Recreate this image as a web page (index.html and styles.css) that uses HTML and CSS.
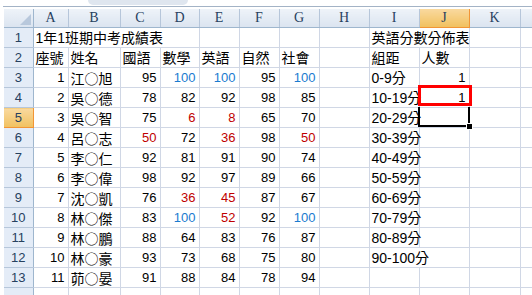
FILE: index.html
```html
<!DOCTYPE html>
<html lang="zh-Hant">
<head>
  <meta charset="UTF-8">
  <meta name="viewport" content="width=device-width, initial-scale=1.0">
  <link rel="stylesheet" href="styles.css">
  <title>1年1班期中考成績表</title>
</head>
<body>

  <div class="topbar">
    <div class="splitter"></div>
  </div>

  <div class="sheet">
    <table class="grid">
      <colgroup>
        <col style="width:29px">
        <col style="width:35px">
        <col style="width:52px">
        <col style="width:40px">
        <col style="width:39px">
        <col style="width:40px">
        <col style="width:40px">
        <col style="width:40px">
        <col style="width:50px">
        <col style="width:50px">
        <col style="width:50px">
        <col style="width:51px">
        <col style="width:12px">
      </colgroup>
      <tr class="colhead">
        <th class="corner"></th>
        <th>A</th><th>B</th><th>C</th><th>D</th><th>E</th><th>F</th><th>G</th>
        <th>H</th><th>I</th><th class="sel">J</th><th>K</th><th></th>
      </tr>
      <tr>
        <th class="rowhead">1</th>
        <td colspan="4" class="txt">1年1班期中考成績表</td>
        <td></td><td></td><td></td><td></td>
        <td colspan="2" class="txt">英語分數分佈表</td>
        <td></td><td></td>
      </tr>
      <tr>
        <th class="rowhead">2</th>
        <td class="txt">座號</td><td class="txt">姓名</td><td class="txt">國語</td><td class="txt">數學</td>
        <td class="txt">英語</td><td class="txt">自然</td><td class="txt">社會</td><td></td>
        <td class="txt">組距</td><td class="txt">人數</td><td></td><td></td>
      </tr>
      <tr>
        <th class="rowhead">3</th>
        <td class="num">1</td><td class="txt name">江○旭</td><td class="num">95</td><td class="num top">100</td>
        <td class="num top">100</td><td class="num">95</td><td class="num top">100</td><td></td>
        <td class="txt">0-9分</td><td class="num">1</td><td></td><td></td>
      </tr>
      <tr>
        <th class="rowhead">4</th>
        <td class="num">2</td><td class="txt name">吳○德</td><td class="num">78</td><td class="num">82</td>
        <td class="num">92</td><td class="num">98</td><td class="num">85</td><td></td>
        <td class="txt">10-19分</td><td class="num">1</td><td></td><td></td>
      </tr>
      <tr>
        <th class="rowhead sel">5</th>
        <td class="num">3</td><td class="txt name">吳○智</td><td class="num">75</td><td class="num low">6</td>
        <td class="num low">8</td><td class="num">65</td><td class="num">70</td><td></td>
        <td class="txt">20-29分</td><td></td><td></td><td></td>
      </tr>
      <tr>
        <th class="rowhead">6</th>
        <td class="num">4</td><td class="txt name">呂○志</td><td class="num low">50</td><td class="num">72</td>
        <td class="num low">36</td><td class="num">98</td><td class="num low">50</td><td></td>
        <td class="txt">30-39分</td><td></td><td></td><td></td>
      </tr>
      <tr>
        <th class="rowhead">7</th>
        <td class="num">5</td><td class="txt name">李○仁</td><td class="num">92</td><td class="num">81</td>
        <td class="num">91</td><td class="num">90</td><td class="num">74</td><td></td>
        <td class="txt">40-49分</td><td></td><td></td><td></td>
      </tr>
      <tr>
        <th class="rowhead">8</th>
        <td class="num">6</td><td class="txt name">李○偉</td><td class="num">98</td><td class="num">92</td>
        <td class="num">97</td><td class="num">89</td><td class="num">66</td><td></td>
        <td class="txt">50-59分</td><td></td><td></td><td></td>
      </tr>
      <tr>
        <th class="rowhead">9</th>
        <td class="num">7</td><td class="txt name">沈○凱</td><td class="num">76</td><td class="num low">36</td>
        <td class="num low">45</td><td class="num">87</td><td class="num">67</td><td></td>
        <td class="txt">60-69分</td><td></td><td></td><td></td>
      </tr>
      <tr>
        <th class="rowhead">10</th>
        <td class="num">8</td><td class="txt name">林○傑</td><td class="num">83</td><td class="num top">100</td>
        <td class="num low">52</td><td class="num">92</td><td class="num top">100</td><td></td>
        <td class="txt">70-79分</td><td></td><td></td><td></td>
      </tr>
      <tr>
        <th class="rowhead">11</th>
        <td class="num">9</td><td class="txt name">林○鵬</td><td class="num">88</td><td class="num">64</td>
        <td class="num">83</td><td class="num">76</td><td class="num">87</td><td></td>
        <td class="txt">80-89分</td><td></td><td></td><td></td>
      </tr>
      <tr>
        <th class="rowhead">12</th>
        <td class="num">10</td><td class="txt name">林○豪</td><td class="num">93</td><td class="num">73</td>
        <td class="num">68</td><td class="num">75</td><td class="num">80</td><td></td>
        <td colspan="2" class="txt">90-100分</td><td></td><td></td>
      </tr>
      <tr>
        <th class="rowhead">13</th>
        <td class="num">11</td><td class="txt name">茆○晏</td><td class="num">91</td><td class="num">88</td>
        <td class="num">84</td><td class="num">78</td><td class="num">94</td><td></td>
        <td></td><td></td><td></td><td></td>
      </tr>
      <tr>
        <th class="rowhead"></th>
        <td></td><td></td><td></td><td></td><td></td><td></td><td></td>
        <td></td><td></td><td></td><td></td><td></td>
      </tr>
    </table>

    <!-- drawn rectangle over J4 and the active cell J5 -->
    <div class="redbox"></div>
    <div class="active"><span class="handle"></span></div>
  </div>

</body>
</html>
```

FILE: styles.css
```css
html, body {
  margin: 0;
  height: 295px;
  overflow: hidden;
  background: #fff;
}

body {
  font-family: 'Liberation Sans', 'Noto Sans CJK TC', sans-serif;
  font-size: 13px;
  color: #000;
}

.topbar {
  height: 6px;
  margin-left: 3px;
  border-bottom: 1px solid #a3b3c6;
  margin-bottom: 2px;
  display: flex;
}

.splitter {
  width: 100px;
  margin-left: 85px;
  height: 5px;
  background: #dfe6ef;
  border-bottom-left-radius: 6px;
  border-bottom-right-radius: 6px;
}

.sheet {
  position: relative;
  padding-left: 4px;
}

.grid {
  border-collapse: collapse;
  table-layout: fixed;
  width: 528px;
}

.grid td {
  height: 19px;
  padding: 0 3px 0 3px;
  border-right: 1px solid #d0d7e5;
  border-bottom: 1px solid #d0d7e5;
  line-height: 18px;
  vertical-align: bottom;
  white-space: nowrap;
  overflow: visible;
}

.grid .txt {
  font-size: 14px;
  text-align: left;
  padding-left: 2px;
}

.grid .name {
  font-family: 'Noto Sans CJK TC', sans-serif;
}

.grid .num {
  text-align: right;
}

.grid .top {
  color: #1a7bd0;
}

.grid .low {
  color: #c00000;
}

.colhead th {
  height: 18px;
  padding: 0;
  font-family: 'Liberation Serif', serif;
  font-weight: normal;
  font-size: 14px;
  color: #27415f;
  background: linear-gradient(#eef3f9, #dbe4f0);
  border-right: 1px solid #b6c6da;
  border-bottom: 1px solid #9eb6ce;
  line-height: 18px;
}

.colhead .corner {
  position: relative;
  border-right: 1px solid #9eb6ce;
}

.corner::after {
  content: '';
  position: absolute;
  right: 2px;
  bottom: 2px;
  border-left: 11px solid transparent;
  border-bottom: 11px solid #b8c8dc;
}

.rowhead {
  padding: 0;
  font-weight: normal;
  font-size: 13px;
  color: #27415f;
  background: #e4ecf7;
  border-right: 1px solid #9eb6ce;
  border-bottom: 1px solid #b6c6da;
  text-align: center;
  vertical-align: middle;
}

.grid .sel {
  background: linear-gradient(#f9d99f, #f1c15f);
  border-right-color: #f29536;
  border-bottom-color: #f29536;
}

.redbox {
  position: absolute;
  left: 418px;
  top: 76px;
  width: 48px;
  height: 15px;
  border: 3px solid #ff0000;
}

.active {
  position: absolute;
  left: 418px;
  top: 98px;
  width: 48px;
  height: 18px;
  border: 2px solid #000;
  border-top: none;
}

.handle {
  position: absolute;
  right: -5px;
  bottom: -5px;
  width: 5px;
  height: 5px;
  background: #000;
  border: 1px solid #fff;
}
```
